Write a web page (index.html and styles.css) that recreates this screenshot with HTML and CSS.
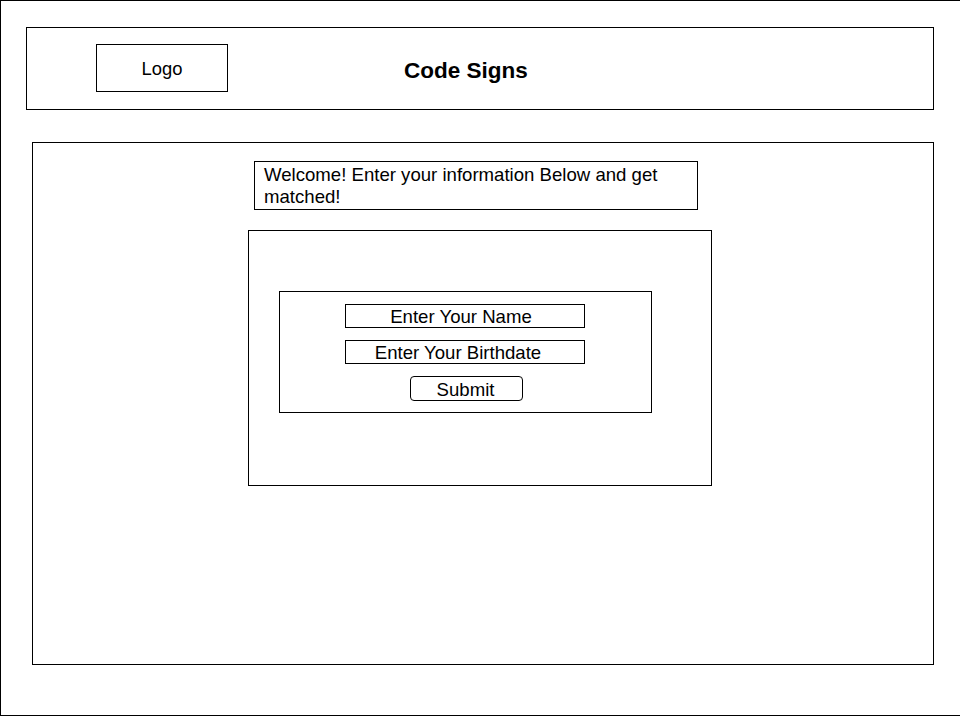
FILE: index.html
```html
<!DOCTYPE html>
<html lang="en">
<head>
<meta charset="utf-8">
<title>Code Signs</title>
<link rel="stylesheet" href="styles.css">
</head>
<body>
<div class="frame">
  <header class="header">
    <div class="logo">Logo</div>
    <h1 class="title">Code Signs</h1>
  </header>
  <main class="main">
    <p class="welcome">Welcome! Enter your information Below and get matched!</p>
    <section class="form-outer">
      <form class="form-inner">
        <div class="field field-name">Enter Your Name</div>
        <div class="field field-shift">Enter Your Birthdate</div>
        <div class="submit">Submit</div>
      </form>
    </section>
  </main>
</div>
</body>
</html>
```
FILE: styles.css
```css
html, body {
  margin: 0;
  padding: 0;
  background: #fff;
}
body {
  font-family: "Liberation Sans", Arial, sans-serif;
  color: #000;
  width: 960px;
  height: 720px;
  overflow: hidden;
}
.frame {
  box-sizing: border-box;
  width: 960px;
  height: 716px;
  border-top: 1px solid #000;
  border-left: 1px solid #000;
  border-bottom: 1px solid #000;
  padding-top: 26px;
  padding-left: 25px;
}
.header {
  box-sizing: border-box;
  width: 908px;
  height: 83px;
  border: 1px solid #000;
  display: flex;
  align-items: flex-start;
  padding-left: 69px;
  padding-top: 16px;
}
.logo {
  box-sizing: border-box;
  width: 132px;
  height: 48px;
  border: 1px solid #000;
  display: flex;
  align-items: center;
  justify-content: center;
  font-size: 18.4px;
  padding-top: 2px;
}
.title {
  margin: 0 0 0 176px;
  font-size: 22.5px;
  font-weight: bold;
  line-height: 54px;
}
.main {
  box-sizing: border-box;
  width: 902px;
  height: 523px;
  margin-top: 32px;
  margin-left: 6px;
  border: 1px solid #000;
  padding-top: 18px;
  padding-left: 215px;
}
.welcome {
  box-sizing: border-box;
  margin: 0 0 0 6px;
  width: 444px;
  height: 49px;
  border: 1px solid #000;
  padding: 2px 9px 0;
  font-size: 18.6px;
  line-height: 22px;
}
.form-outer {
  box-sizing: border-box;
  margin-top: 20px;
  width: 464px;
  height: 256px;
  border: 1px solid #000;
  padding-top: 60px;
  padding-left: 30px;
}
.form-inner {
  box-sizing: border-box;
  margin: 0;
  width: 373px;
  height: 122px;
  border: 1px solid #000;
  padding-top: 12px;
  padding-left: 65px;
  display: flex;
  flex-direction: column;
  align-items: flex-start;
  gap: 12px;
}
.field {
  box-sizing: border-box;
  width: 240px;
  height: 24px;
  border: 1px solid #000;
  font-size: 18.6px;
  line-height: 24px;
  text-align: center;
}
.field-name {
  padding-right: 8px;
}
.field-shift {
  padding-right: 14px;
}
.submit {
  box-sizing: border-box;
  margin-left: 65px;
  width: 113px;
  height: 25px;
  border: 1px solid #000;
  border-radius: 4px;
  font-size: 18.6px;
  line-height: 25px;
  text-align: center;
  padding-right: 2px;
}
```
